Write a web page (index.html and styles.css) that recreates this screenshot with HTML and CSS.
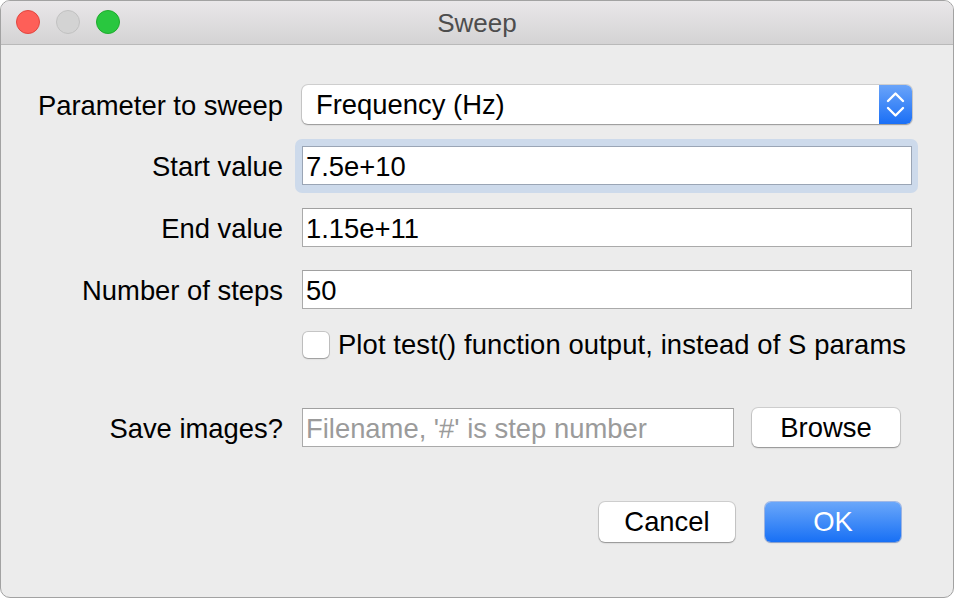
FILE: index.html
```
<!DOCTYPE html>
<html>
<head>
<meta charset="utf-8">
<title>Sweep</title>
<link rel="stylesheet" href="styles.css">
</head>
<body>
<div class="window">
  <div class="titlebar">
    <div class="lights">
      <span class="light red"></span>
      <span class="light gray"></span>
      <span class="light green"></span>
    </div>
    <div class="title">Sweep</div>
    <div class="spacer"></div>
  </div>
  <div class="content">
    <div class="row r-param">
      <div class="lbl">Parameter to sweep</div>
      <div class="combo">
        <span class="combo-text">Frequency (Hz)</span>
        <span class="stepper">
          <svg width="33" height="39" viewBox="0 0 33 39"><polyline points="9,16 16.5,8.5 24,16" fill="none" stroke="#fff" stroke-width="2.4" stroke-linecap="round" stroke-linejoin="round"/><polyline points="9,23 16.5,30.5 24,23" fill="none" stroke="#fff" stroke-width="2.4" stroke-linecap="round" stroke-linejoin="round"/></svg>
        </span>
      </div>
    </div>
    <div class="row r-start">
      <div class="lbl">Start value</div>
      <div class="focus"><div class="field focused">7.5e+10</div></div>
    </div>
    <div class="row r-end">
      <div class="lbl">End value</div>
      <div class="field">1.15e+11</div>
    </div>
    <div class="row r-num">
      <div class="lbl">Number of steps</div>
      <div class="field">50</div>
    </div>
    <div class="row r-check">
      <div class="lbl"></div>
      <span class="checkbox"></span>
      <span class="check-text">Plot test() function output, instead of S params</span>
    </div>
    <div class="row r-save">
      <div class="lbl">Save images?</div>
      <div class="field short placeholder">Filename, '#' is step number</div>
      <div class="btn browse">Browse</div>
    </div>
    <div class="row r-buttons">
      <div class="btn">Cancel</div>
      <div class="btn primary">OK</div>
    </div>
  </div>
</div>
</body>
</html>
```
FILE: styles.css
```
* { box-sizing: border-box; }
html, body { margin: 0; padding: 0; background: #ffffff; }
body {
  font-family: "Liberation Sans", Arial, sans-serif;
  color: #000;
}
.window {
  width: 954px;
  height: 598px;
  border: 1px solid #a2a2a2;
  border-radius: 10px;
  background: #ececec;
  overflow: hidden;
}
.titlebar {
  height: 44px;
  border-bottom: 1px solid #b9b9b9;
  background: linear-gradient(#e9e7e9, #d4d3d4);
  display: grid;
  grid-template-columns: 1fr auto 1fr;
  align-items: center;
}
.lights {
  display: flex;
  gap: 16px;
  padding-left: 15px;
  padding-bottom: 1px;
}
.light {
  width: 24px;
  height: 24px;
  border-radius: 50%;
  display: block;
}
.red { background: #fe5f58; border: 1px solid #e1463f; }
.gray { background: #d3d3d3; border: 1px solid #c1c1c1; }
.green { background: #29c73f; border: 1px solid #1fab2d; }
.title {
  font-size: 26px;
  color: #4d4d4d;
  padding-top: 1px;
}
.content {
  padding-top: 40px;
  display: flex;
  flex-direction: column;
}
.row {
  display: flex;
  align-items: center;
}
.lbl {
  width: 282px;
  flex: none;
  text-align: right;
  font-size: 27.4px;
  margin-right: 19px;
  white-space: nowrap;
  padding-top: 2px;
}
.r-start { margin-top: 22px; }
.r-end { margin-top: 23px; }
.r-num { margin-top: 23px; }
.r-check { margin-top: 23px; height: 26px; }
.r-save { margin-top: 50px; }
.r-buttons { margin-top: 55px; justify-content: flex-end; padding-right: 52px; gap: 30px; }

.combo {
  width: 610px;
  height: 39px;
  background: #fff;
  border-radius: 6px;
  box-shadow: 0 0 0 1px rgba(0,0,0,0.12), 0 1px 1.5px rgba(0,0,0,0.28);
  display: flex;
  align-items: center;
  overflow: hidden;
}
.combo-text {
  flex: 1;
  font-size: 27.4px;
  padding-left: 14px;
  padding-top: 1px;
  white-space: nowrap;
}
.stepper {
  width: 33px;
  height: 39px;
  flex: none;
  background: linear-gradient(#6aa4f9, #1a6ff6);
  display: block;
}
.stepper svg { display: block; }

.focus {
  margin: -7px -6px -8px -7px;
  padding: 7px 6px 8px 7px;
  background: #cddaeb;
  border-radius: 7px;
}
.field {
  width: 610px;
  height: 39px;
  background: #fff;
  border: 1px solid #aaaaaa;
  border-top-color: #a0a0a0;
  font-size: 27.4px;
  padding-left: 3px;
  padding-top: 2px;
  display: flex;
  align-items: center;
  white-space: nowrap;
}
.field.focused { border-color: #9aa5b5; }
.field.short { width: 432px; }
.placeholder { color: #9b9b9b; }

.checkbox {
  width: 26px;
  height: 26px;
  flex: none;
  background: #fff;
  border-radius: 5px;
  box-shadow: 0 0 0 1px rgba(0,0,0,0.16), 0 1px 1.5px rgba(0,0,0,0.22);
  margin-left: 1px;
}
.check-text {
  font-size: 27.4px;
  line-height: 26px;
  margin-left: 9px;
  white-space: nowrap;
  letter-spacing: 0.1px;
}

.btn {
  width: 136px;
  height: 40px;
  background: #fff;
  border-radius: 6px;
  box-shadow: 0 0 0 1px rgba(0,0,0,0.12), 0 1px 1.5px rgba(0,0,0,0.3);
  font-size: 27.4px;
  display: flex;
  align-items: center;
  justify-content: center;
}
.browse {
  width: 148px;
  height: 39px;
  margin-left: 18px;
}
.primary {
  background: linear-gradient(#6aa7fa, #1870f5);
  color: #fff;
  box-shadow: 0 0 0 1px rgba(20,90,220,0.35), 0 1px 1.5px rgba(0,0,0,0.2);
}
```
